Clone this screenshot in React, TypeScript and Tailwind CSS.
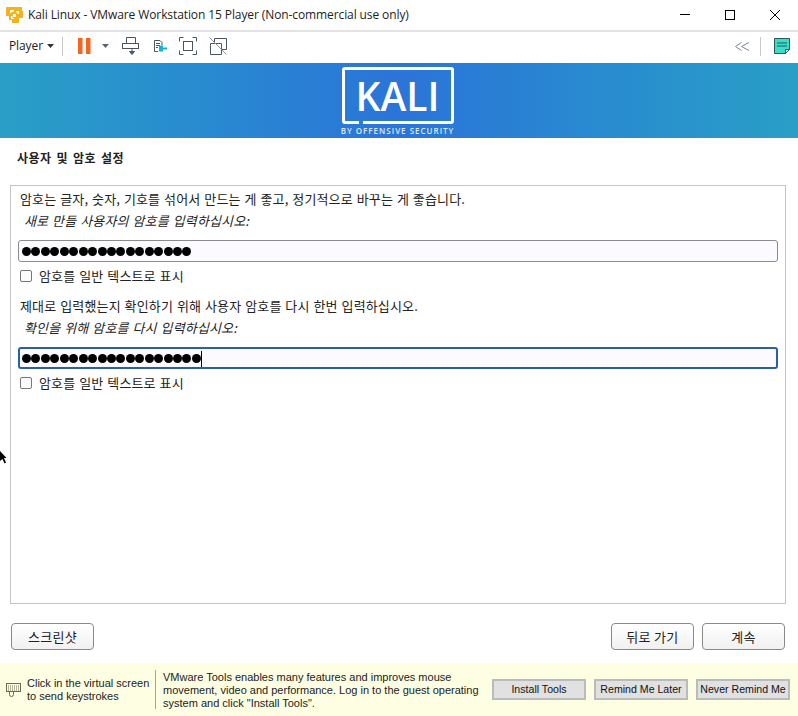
const korean = "font-['Noto_Sans_CJK_KR',sans-serif]";
const bodyText = "text-[13px] tracking-[0.15px] [word-spacing:0.8px] text-[#222]";

function ToolbarIcons() {
  return (
    <div className="flex items-center">
      <svg width="13" height="16" viewBox="0 0 13 16" className="ml-[15px]">
        <rect x="0" y="0" width="4.500" height="16" fill="#f4651f" />
        <rect x="8" y="0" width="4.500" height="16" fill="#f4651f" />
      </svg>
      <svg width="7" height="4" viewBox="0 0 7 4" className="ml-[11px]">
        <path d="M0 0h7L3.500 4z" fill="#5c6670" />
      </svg>
      <svg width="17" height="18" viewBox="0 0 17 18" className="ml-[13px]" fill="none" stroke="#4b5560">
        <path d="M4.500 6V0.500h9V6" />
        <rect x="0.500" y="6.500" width="16" height="5" />
        <path d="M10 12v3" />
        <path d="M7.500 14.500h5L10 17.500z" fill="#4b5560" />
      </svg>
      <svg width="13" height="12" viewBox="0 0 13 12" className="ml-[15px]">
        <path d="M4 11.500H0.500V0.500H6L8 2.500V5" fill="none" stroke="#4b5560" />
        <path d="M2 3.500h4M2 5.500h4M2 7.500h2" stroke="#4b5560" />
        <path d="M5 5.500h4v2h4v2H9v2H5z" fill="#11b5d6" />
      </svg>
      <svg width="18" height="18" viewBox="0 0 18 18" className="ml-[12px]" fill="none" stroke="#4b5560">
        <path d="M0.500 4.500V0.500H4.500M13.500 0.500h4V4.500M17.500 13.500v4h-4M4.500 17.500h-4v-4" />
        <rect x="4.500" y="4.500" width="9" height="9" />
      </svg>
      <svg width="18" height="18" viewBox="0 0 18 18" className="ml-[12px]" fill="none" stroke="#4b5560">
        <path d="M5.500 1.500h12v11h-5v5h-11V6.500h4z" />
        <path d="M5.500 6.500h7v6" />
        <path d="M0.500 0.500L17.500 17.500" stroke="#8d959d" />
      </svg>
    </div>
  );
}

function PasswordBlock({
  help,
  prompt,
  dots,
  focused,
}: {
  help: string;
  prompt: string;
  dots: number;
  focused?: boolean;
}) {
  return (
    <div>
      <p className={`h-[20px] pl-[9px] leading-[20px] ${bodyText}`}>{help}</p>
      <p className={`mt-[2px] h-[20px] pl-[13px] italic leading-[20px] ${bodyText}`}>{prompt}</p>
      <div
        className={
          focused
            ? "mx-[7px] mt-[9px] flex h-[22px] items-center rounded-[3px] border-2 border-[#2a5fa8] bg-[#fdfaff] pl-[2px] pt-[1px]"
            : "mx-[7px] mt-[9px] flex h-[22px] items-center rounded-[3px] border border-[#8b8b8b] bg-[#fdfaff] pl-[3px] pt-[1px]"
        }
      >
        <span className="flex gap-[0.44px]">
          {Array.from({ length: dots }).map((_, i) => (
            <span key={i} className="h-[9px] w-[9px] rounded-full bg-black" />
          ))}
        </span>
        {focused && <span className="h-[16px] w-[1px] bg-black" />}
      </div>
      <label className={`mt-[5px] flex h-[18px] items-center pl-[9px] ${bodyText}`}>
        <span className="h-[12px] w-[12px] rounded-[2px] border border-[#777] bg-[#fbfbfb]" />
        <span className="ml-[7px]">암호를 일반 텍스트로 표시</span>
      </label>
    </div>
  );
}

function InstallerButton({ children }: { children: string }) {
  return (
    <button className="h-[27px] w-[83px] rounded-[4px] border border-[#8a8a8a] bg-gradient-to-b from-white to-[#f1f1f1] text-[13px] tracking-[0.3px] text-[#222]">
      {children}
    </button>
  );
}

function ToolsButton({ children }: { children: string }) {
  return (
    <button className="h-[21px] w-[94px] whitespace-nowrap border-2 border-[#b9bcbc] bg-[#e1e1e1] text-[10.600px] text-[#111]">
      {children}
    </button>
  );
}

export default function App() {
  return (
    <div className="relative flex h-[716px] w-[798px] flex-col overflow-hidden bg-white">
      {/* title bar */}
      <div className="flex h-[30px] shrink-0 items-center">
        <svg width="17" height="16" viewBox="0 0 17 16" className="ml-[6px]">
          <path d="M0 0h16v4h1v7h-4v5H6v-3H3V9H0z" fill="#f5b31a" />
          <path d="M4 3h4v1.500H5.500V6H4zM10 4h3v3h-1.500V5.500H10zM7 7h3v3H7zM5 9h1.500v2H8v1H5z" fill="#fff" />
        </svg>
        <span className="ml-[5px] text-[12px] tracking-[-0.1px] text-[#222] font-['Open_Sans',sans-serif]">
          Kali Linux - VMware Workstation 15 Player (Non-commercial use only)
        </span>
        <div className="ml-auto flex items-center gap-[35px] pr-[18px]">
          <svg width="10" height="10" viewBox="0 0 10 10" stroke="#000" fill="none">
            <path d="M0 4.500h10" />
          </svg>
          <svg width="10" height="10" viewBox="0 0 10 10" stroke="#000" fill="none">
            <rect x="0.500" y="0.500" width="9" height="9" />
          </svg>
          <svg width="10" height="10" viewBox="0 0 10 10" stroke="#000" fill="none">
            <path d="M0 0l10 10M10 0L0 10" />
          </svg>
        </div>
      </div>

      {/* toolbar */}
      <div className="flex h-[33px] shrink-0 items-center border-t-2 border-[#e2e2e2] pb-[3px] pl-[9px] pr-[8px]">
        <span className="w-[38px] text-[12px] tracking-[-0.1px] text-[#222] font-['Open_Sans',sans-serif]">Player</span>
        <svg width="7" height="4" viewBox="0 0 7 4">
          <path d="M0 0h7L3.500 4z" fill="#333" />
        </svg>
        <span className="ml-[8px] h-[19px] w-[1px] bg-[#c8c8c8]" />
        <ToolbarIcons />
        <div className="ml-auto flex items-center">
          <svg width="15" height="9" viewBox="0 0 15 9" fill="none" stroke="#7b8794">
            <path d="M6.500 0.500L0.500 4.500L6.500 8.500M14 0.500L6.500 4.500L14 8.500" />
          </svg>
          <span className="ml-[10px] h-[19px] w-[1px] bg-[#c8c8c8]" />
          <svg width="16" height="16" viewBox="0 0 16 16" className="ml-[13px]">
            <path d="M0.500 0.500h15v11l-4 4h-11z" fill="#35dfc8" stroke="#33555a" />
            <path d="M3 5h10M3 8h10" stroke="#33555a" />
            <path d="M11.500 15.500v-4h4z" fill="#dff" stroke="#33555a" />
          </svg>
        </div>
      </div>

      {/* kali banner */}
      <div className="flex h-[75px] shrink-0 flex-col items-center bg-gradient-to-r from-[#2a9fc6] via-[#2b74d8] to-[#2a9fc6] pr-[3px]">
        <div className="relative mt-[4px] flex h-[57px] w-[112px] items-center justify-center rounded-[3px] border-[3px] border-white">
          <span className="text-[39px] font-semibold leading-none text-white font-['Open_Sans',sans-serif]">KALI</span>
          <span className="absolute bottom-[-3px] left-[14px] h-[3px] w-[4px] bg-[#2b7cd4]" />
        </div>
        <span className="mt-[2px] whitespace-nowrap text-[8px] font-semibold leading-[10px] tracking-[1px] text-[#dbe8f8] font-['Open_Sans',sans-serif]">
          BY OFFENSIVE SECURITY
        </span>
      </div>

      {/* installer page */}
      <div className={`flex min-h-0 flex-1 flex-col ${korean}`}>
        <h1 className="mt-[12px] h-[16px] pl-[17px] text-[12px] font-bold leading-[16px] tracking-[0.4px] text-[#222] [word-spacing:2px]">
          사용자 및 암호 설정
        </h1>
        <div className="ml-[10px] mr-[12px] mt-[19px] flex h-[419px] flex-col gap-[11px] border border-[#c4c4c4] pt-[3px]">
          <PasswordBlock
            help="암호는 글자, 숫자, 기호를 섞어서 만드는 게 좋고, 정기적으로 바꾸는 게 좋습니다."
            prompt="새로 만들 사용자의 암호를 입력하십시오:"
            dots={18}
          />
          <PasswordBlock
            help="제대로 입력했는지 확인하기 위해 사용자 암호를 다시 한번 입력하십시오."
            prompt="확인을 위해 암호를 다시 입력하십시오:"
            dots={19}
            focused
          />
        </div>
        <div className="mt-[19px] flex items-center pl-[11px] pr-[13px]">
          <InstallerButton>스크린샷</InstallerButton>
          <div className="ml-auto flex gap-[8px]">
            <InstallerButton>뒤로 가기</InstallerButton>
            <InstallerButton>계속</InstallerButton>
          </div>
        </div>
      </div>

      {/* vmware tools hint */}
      <div className="flex h-[53px] shrink-0 items-center bg-[#fefee2] pl-[6px] pr-[8px] font-['Liberation_Sans',sans-serif]">
        <svg width="15" height="15" viewBox="0 0 15 15" fill="none" stroke="#6b6b55">
          <rect x="0.500" y="1.500" width="14" height="8" />
          <path d="M2 4h11M2 6h11M2 8h11" strokeDasharray="1 1" />
          <path d="M3.500 9.500v3a2 2 0 0 0 4 0v-3" />
        </svg>
        <p className="ml-[6px] w-[128px] whitespace-nowrap pt-[1px] text-[11px] leading-[13px] text-[#222]">
          Click in the virtual screen
          <br />
          to send keystrokes
        </p>
        <span className="h-[39px] w-[1px] bg-[#a5a596]" />
        <p className="ml-[7px] whitespace-nowrap pt-[1px] text-[11px] leading-[13px] text-[#222]">
          VMware Tools enables many features and improves mouse
          <br />
          movement, video and performance. Log in to the guest operating
          <br />
          system and click "Install Tools".
        </p>
        <div className="ml-auto flex gap-[8px]">
          <ToolsButton>Install Tools</ToolsButton>
          <ToolsButton>Remind Me Later</ToolsButton>
          <ToolsButton>Never Remind Me</ToolsButton>
        </div>
      </div>

      {/* mouse pointer */}
      <svg width="7" height="13" viewBox="0 0 7 13" className="absolute left-0 top-[451px]">
        <path d="M0 0l6.500 7H4l2 4.500-1.500 1L2.500 8 0 10z" fill="#000" />
      </svg>
    </div>
  );
}
